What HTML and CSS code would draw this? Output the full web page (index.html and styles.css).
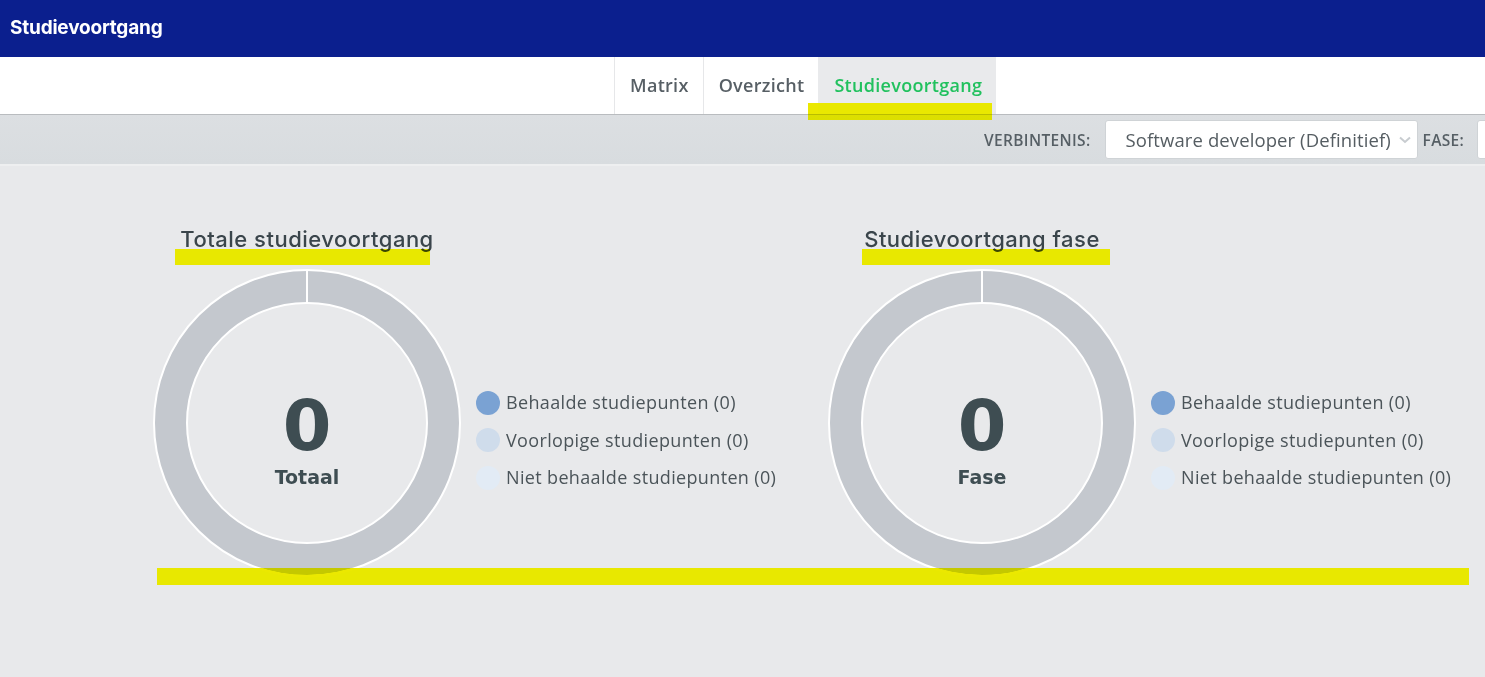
FILE: index.html
```html
<!DOCTYPE html>
<html lang="nl">
<head>
<meta charset="utf-8">
<title>Studievoortgang</title>
<link rel="stylesheet" href="styles.css">
</head>
<body>
<div class="page">
  <header class="topbar"><span class="brand">Studievoortgang</span></header>
  <nav class="tabs">
    <a class="tab">Matrix</a>
    <a class="tab">Overzicht</a>
    <a class="tab active">Studievoortgang</a>
  </nav>
  <div class="toolbar">
    <span class="label">VERBINTENIS:</span>
    <div class="select">
      <span>Software developer (Definitief)</span>
      <svg class="chev" width="12" height="8" viewBox="0 0 12 8"><path d="M1 1.5 L6 6 L11 1.5" fill="none" stroke="#c8ccd0" stroke-width="2"/></svg>
    </div>
    <span class="label">FASE:</span>
    <div class="select wide"></div>
  </div>
  <main class="content">
    <section class="block">
      <div class="chart">
        <h2>Totale studievoortgang</h2>
        <div class="donut">
          <svg width="310" height="310" viewBox="0 0 310 310">
            <circle cx="155" cy="155" r="136.5" fill="none" stroke="#c4c8ce" stroke-width="33"/>
            <circle cx="155" cy="155" r="153" fill="none" stroke="#ffffff" stroke-width="2"/>
            <circle cx="155" cy="155" r="120" fill="none" stroke="#ffffff" stroke-width="2"/>
            <line x1="155" y1="1" x2="155" y2="35" stroke="#ffffff" stroke-width="2"/>
          </svg>
          <div class="center"><span class="num">0</span><span class="cap">Totaal</span></div>
        </div>
      </div>
      <ul class="legend">
        <li><i class="dot d1"></i>Behaalde studiepunten (0)</li>
        <li><i class="dot d2"></i>Voorlopige studiepunten (0)</li>
        <li><i class="dot d3"></i>Niet behaalde studiepunten (0)</li>
      </ul>
    </section>
    <section class="block">
      <div class="chart">
        <h2>Studievoortgang fase</h2>
        <div class="donut">
          <svg width="310" height="310" viewBox="0 0 310 310">
            <circle cx="155" cy="155" r="136.5" fill="none" stroke="#c4c8ce" stroke-width="33"/>
            <circle cx="155" cy="155" r="153" fill="none" stroke="#ffffff" stroke-width="2"/>
            <circle cx="155" cy="155" r="120" fill="none" stroke="#ffffff" stroke-width="2"/>
            <line x1="155" y1="1" x2="155" y2="35" stroke="#ffffff" stroke-width="2"/>
          </svg>
          <div class="center"><span class="num">0</span><span class="cap">Fase</span></div>
        </div>
      </div>
      <ul class="legend">
        <li><i class="dot d1"></i>Behaalde studiepunten (0)</li>
        <li><i class="dot d2"></i>Voorlopige studiepunten (0)</li>
        <li><i class="dot d3"></i>Niet behaalde studiepunten (0)</li>
      </ul>
    </section>
  </main>
  <div class="mark m-tab"></div>
  <div class="mark m-h1"></div>
  <div class="mark m-h2"></div>
  <div class="mark m-bar"></div>
</div>
</body>
</html>
```

FILE: styles.css
```css
* { box-sizing: border-box; }
html, body { margin: 0; padding: 0; }
body {
  background: #e8e9eb;
  font-family: "Open Sans", "Liberation Sans", sans-serif;
  overflow: hidden;
}
.page {
  position: relative;
  width: 1485px;
  height: 677px;
  overflow: hidden;
  background: #e8e9eb;
}
.topbar {
  height: 57px;
  background: #0b1f8e;
  display: flex;
  align-items: center;
  padding-left: 10px;
}
.brand {
  color: #ffffff;
  font-family: "Inter", "Lato", sans-serif;
  font-weight: 700;
  font-size: 19px;
  letter-spacing: -0.2px;
  margin-top: -2px;
}
.tabs {
  height: 57px;
  background: #ffffff;
  display: flex;
  padding-left: 614px;
}
.tab {
  display: flex;
  align-items: center;
  padding: 0 14px 0 15px;
  border-left: 1px solid #e6e7e9;
  font-size: 18px;
  font-weight: 600;
  letter-spacing: 0.3px;
  color: #575f65;
  padding-bottom: 1px;
}
.tab.active {
  background: #e9eaec;
  color: #21c15e;
  border-left: 1px solid #e9eaec;
}
.toolbar {
  height: 52px;
  background: linear-gradient(#dcdfe2, #d8dcdf);
  border-top: 1px solid #b9bcbf;
  border-bottom: 2px solid #eeeff0;
  display: flex;
  align-items: center;
  padding-left: 984px;
  white-space: nowrap;
}
.label {
  font-size: 15.5px;
  font-weight: 600;
  letter-spacing: 0.35px;
  color: #565f65;
  margin-right: 14px;
}
.select {
  flex: none;
  height: 39px;
  width: 313px;
  background: #ffffff;
  border: 1px solid #cfd3d6;
  border-radius: 3px;
  display: flex;
  align-items: center;
  justify-content: space-between;
  padding: 0 6px 0 20px;
  font-size: 18.5px;
  letter-spacing: 0.1px;
  color: #555d62;
  margin-right: 5px;
}
.select span { margin-top: -1px; }
.select.wide { width: 200px; margin-left: -1px; }
.content {
  display: flex;
  padding: 59px 0 0 152px;
  gap: 53px;
}
.block {
  display: flex;
  align-items: flex-end;
  gap: 14px;
  width: 622px;
}
.chart {
  display: flex;
  flex-direction: column;
  align-items: center;
  width: 310px;
  flex: none;
}
.chart h2 {
  margin: 0 0 15px;
  font-family: "Inter", "Lato", sans-serif;
  font-weight: 500;
  font-size: 22px;
  letter-spacing: 0.5px;
  color: #3a454b;
  line-height: 28px;
  white-space: nowrap;
}
.donut {
  position: relative;
  width: 310px;
  height: 310px;
}
.donut svg { display: block; }
.center {
  position: absolute;
  inset: 0;
  display: flex;
  flex-direction: column;
  align-items: center;
  justify-content: center;
  color: #3e4d52;
  font-family: "DejaVu Sans", Verdana, sans-serif;
  font-weight: 700;
}
.num { font-size: 70px; line-height: 70px; margin-top: 34px; }
.cap { font-size: 19px; line-height: 24px; margin-top: 4px; }
.legend {
  list-style: none;
  margin: 0 0 88px;
  padding: 0;
  display: flex;
  flex-direction: column;
  gap: 12.5px;
}
.legend li {
  display: flex;
  align-items: center;
  gap: 6px;
  font-size: 18px;
  letter-spacing: 0.35px;
  color: #4b5459;
  line-height: 25px;
  white-space: nowrap;
}
.dot {
  width: 24px;
  height: 24px;
  border-radius: 50%;
  flex: none;
}
.d1 { background: #7aa2d3; }
.d2 { background: #cfdceb; }
.d3 { background: #e2ebf5; }
.mark {
  position: absolute;
  background: rgb(235, 232, 0);
  mix-blend-mode: darken;
}
.m-tab { left: 808px; top: 103px; width: 184px; height: 17px; }
.m-h1 { left: 175px; top: 249px; width: 255px; height: 16px; }
.m-h2 { left: 862px; top: 249px; width: 248px; height: 16px; }
.m-bar { left: 157px; top: 568px; width: 1312px; height: 17px; }
```
